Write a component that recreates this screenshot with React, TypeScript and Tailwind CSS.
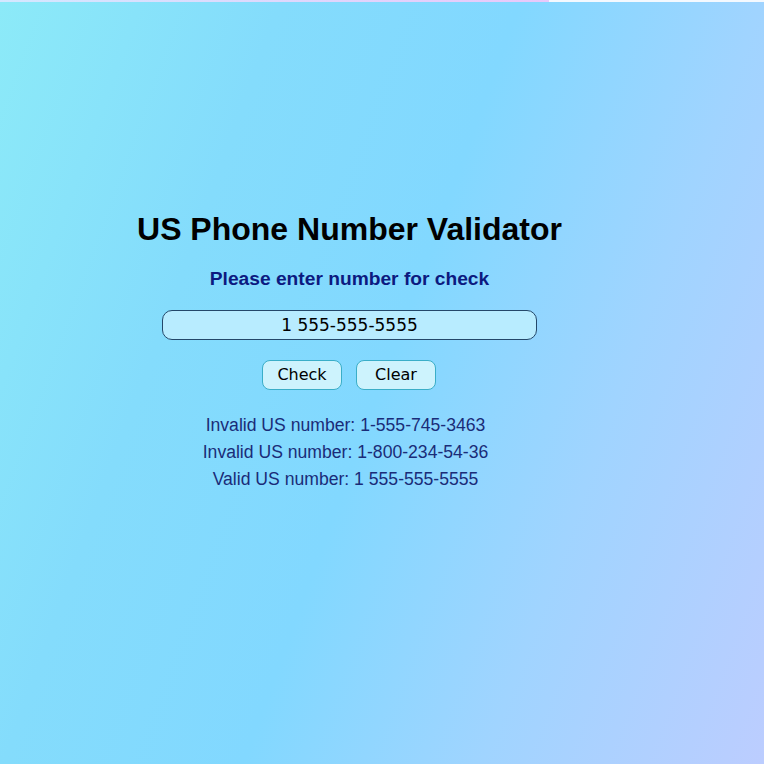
import React, { useState } from "react";

export default function App() {
  const [value, setValue] = useState("1 555-555-5555");
  const results = [
    "Invalid US number: 1-555-745-3463",
    "Invalid US number: 1-800-234-54-36",
    "Valid US number: 1 555-555-5555",
  ];
  return (
    <div className="relative min-h-[764px] w-full bg-[linear-gradient(110deg,#8ceaf8_0%,#84dcfc_27%,#82d8ff_50%,#a0d4ff_73%,#bccdff_100%)]">
      <div className="flex h-[2px] w-full">
        <div className="h-full w-[549px] bg-[linear-gradient(90deg,#d4e8ff,#e8c8fa)]" />
        <div className="h-full flex-1 bg-[#f4f9ff]" />
      </div>
      <div className="flex w-[699px] flex-col items-center pt-[209px] [font-family:'Liberation_Sans',Arial,sans-serif]">
        <h1 className="text-[32px] font-bold leading-[37px] text-black">US Phone Number Validator</h1>
        <p className="mt-[20px] text-[19.2px] font-bold leading-[22px] text-[#0c1a80]">Please enter number for check</p>
        <input
          value={value}
          onChange={(e) => setValue(e.target.value)}
          className="mt-[20px] h-[30px] w-[375px] rounded-[10px] border border-[#24486a] bg-[#b8ecff] text-center text-[17px] text-black outline-none [font-family:'DejaVu_Sans',sans-serif]"
        />
        <div className="mt-[20px] flex gap-[14px] pr-[1px]">
          <button className="h-[30px] w-[80px] rounded-[8px] border border-[#3aaec8] bg-[#cdf3fd] text-[16px] text-black [font-family:'DejaVu_Sans',sans-serif]">
            Check
          </button>
          <button className="h-[30px] w-[80px] rounded-[8px] border border-[#3aaec8] bg-[#cdf3fd] text-[16px] text-black [font-family:'DejaVu_Sans',sans-serif]">
            Clear
          </button>
        </div>
        <div className="mt-[22px] flex flex-col items-center pr-[8px]">
          {results.map((r) => (
            <p key={r} className="text-[17.6px] leading-[27px] text-[#1a2c78]">
              {r}
            </p>
          ))}
        </div>
      </div>
    </div>
  );
}
